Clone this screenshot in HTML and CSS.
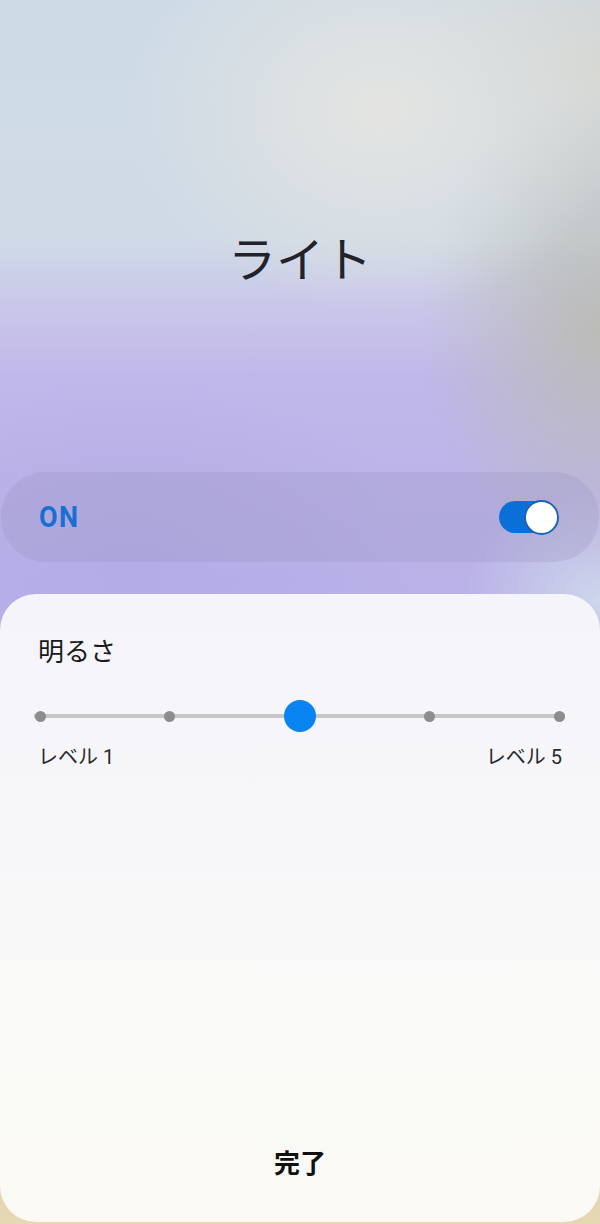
FILE: index.html
```html
<!DOCTYPE html>
<html lang="ja">
<head>
    <meta charset="UTF-8">
    <meta name="viewport" content="width=device-width, initial-scale=1.0">
    <title>ライト</title>
    <link rel="stylesheet" href="styles.css">
</head>
<body>

    <div class="screen">
        <div class="header">
            <h1 class="title">ライト</h1>
        </div>

        <div class="switch-card">
            <span class="switch-label">ON</span>
            <div class="toggle">
                <div class="toggle-thumb"></div>
            </div>
        </div>

        <div class="sheet">
            <div class="sheet-title">明るさ</div>

            <div class="slider">
                <span class="step"><span class="dot"></span></span>
                <span class="step"><span class="dot"></span></span>
                <span class="step"><span class="thumb"></span></span>
                <span class="step"><span class="dot"></span></span>
                <span class="step"><span class="dot"></span></span>
            </div>

            <div class="levels">
                <span>レベル 1</span>
                <span>レベル 5</span>
            </div>

            <button class="done">完了</button>
        </div>
    </div>

</body>
</html>
```

FILE: styles.css
```css
html, body {
    margin: 0;
    padding: 0;
}
body {
    font-family: Roboto, "Noto Sans CJK JP", sans-serif;
    color: #1c1c1c;
    background: #f4f1e6;
}
.screen {
    width: 600px;
    height: 1224px;
    display: flex;
    flex-direction: column;
    background:
        radial-gradient(ellipse 250px 200px at 380px 110px, rgba(229, 229, 225, 0.95), rgba(229, 229, 225, 0) 100%),
        radial-gradient(ellipse 180px 240px at 600px 330px, rgba(186, 187, 180, 0.95), rgba(186, 187, 180, 0) 100%),
        radial-gradient(ellipse 200px 160px at 600px 70px, rgba(214, 214, 208, 0.9), rgba(214, 214, 208, 0) 100%),
        radial-gradient(ellipse 140px 110px at 600px 600px, rgba(206, 216, 234, 0.95), rgba(206, 216, 234, 0) 100%),
        radial-gradient(ellipse 300px 180px at 130px 560px, rgba(178, 170, 230, 0.8), rgba(178, 170, 230, 0) 100%),
        linear-gradient(180deg, #cedbe6 0px, #cfdae6 240px, #c9c6ea 310px, #c0b7ea 380px, #bdb4e9 470px, #b9b1e8 600px, #c6bde0 900px, #e6d8b2 1224px);
}
.header {
    height: 472px;
    display: flex;
    justify-content: center;
}
.title {
    margin: 224px 0 0;
    font-family: "Noto Sans CJK JP", sans-serif;
    font-size: 48px;
    font-weight: 400;
    line-height: 64px;
    color: #22232a;
}
.switch-card {
    height: 90px;
    margin: 0 1px;
    border-radius: 45px;
    background: rgba(150, 145, 190, 0.26);
    display: flex;
    align-items: center;
    justify-content: space-between;
    padding: 0 42px 0 38px;
}
.switch-label {
    font-size: 27px;
    font-weight: 700;
    color: #1a6fd3;
    letter-spacing: 1.5px;
    transform: scaleY(1.08);
}
.toggle {
    width: 58px;
    height: 32px;
    border-radius: 16px;
    background: #0b6fd8;
    display: flex;
    justify-content: flex-end;
    align-items: center;
}
.toggle-thumb {
    width: 31px;
    height: 31px;
    border-radius: 50%;
    background: #fff;
    border: 2px solid #1d63b5;
    margin-right: -2px;
}
.sheet {
    flex: 1;
    margin: 32px 0 2px;
    border-radius: 36px;
    background: linear-gradient(180deg, #f5f4fa 0%, #f7f7fa 35%, #fafaf8 70%, #faf9f3 100%);
    display: flex;
    flex-direction: column;
    padding: 38px 0 0;
}
.sheet-title {
    padding-left: 38px;
    font-family: "Noto Sans CJK JP", sans-serif;
    font-size: 26px;
    line-height: 36px;
    color: #1a1a1a;
}
.slider {
    margin: 31px 35px 0 34px;
    height: 34px;
    display: flex;
    justify-content: space-between;
    align-items: center;
    background: linear-gradient(#c6c6c8, #c6c6c8) center / 100% 4px no-repeat;
}
.step {
    width: 12px;
    display: flex;
    justify-content: center;
    align-items: center;
}
.dot {
    width: 11px;
    height: 11px;
    border-radius: 50%;
    background: #8d8d8f;
}
.thumb {
    flex: none;
    width: 32px;
    height: 32px;
    border-radius: 50%;
    background: #0a84f2;
}
.levels {
    margin: 10px 38px 0;
    display: flex;
    justify-content: space-between;
    font-family: Roboto, "Noto Sans CJK JP", sans-serif;
    font-size: 20px;
    line-height: 28px;
    color: #2a2a2a;
}
.done {
    margin: auto 0 42px;
    align-self: center;
    border: none;
    background: none;
    font-family: "Noto Sans CJK JP", sans-serif;
    font-size: 26px;
    font-weight: 700;
    line-height: 36px;
    color: #111;
    padding: 0 20px;
}
```
